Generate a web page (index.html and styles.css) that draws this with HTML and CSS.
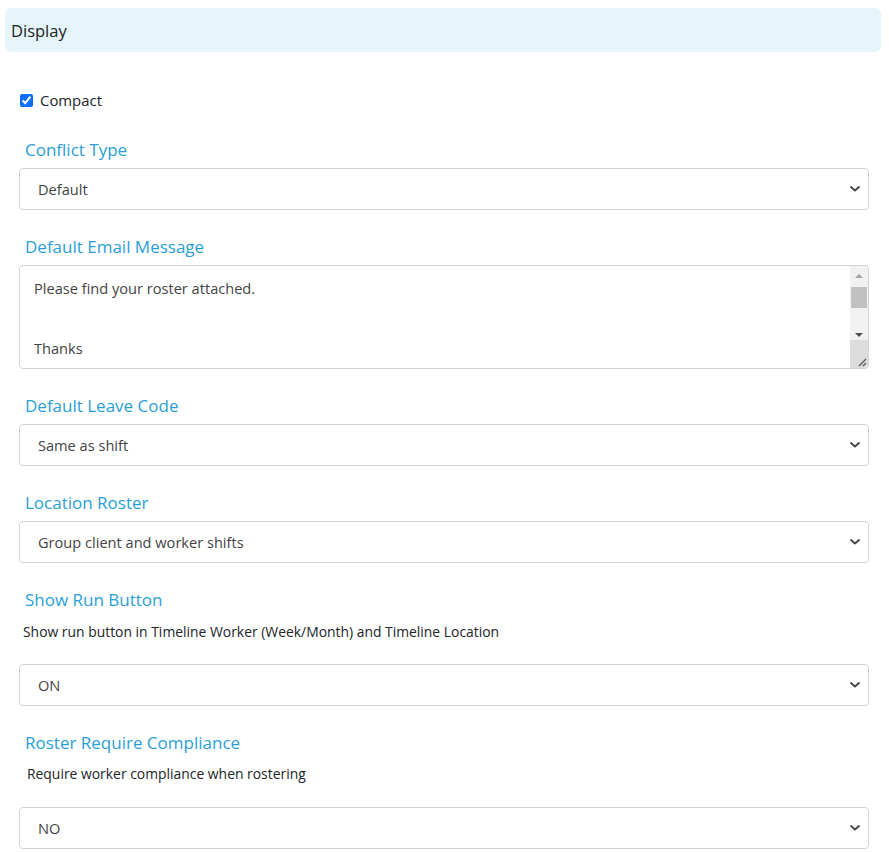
FILE: index.html
```html
<!DOCTYPE html>
<html lang="en">
<head>
    <meta charset="UTF-8">
    <meta name="viewport" content="width=device-width, initial-scale=1.0">
    <title>Display Settings</title>
    <link rel="stylesheet" href="styles.css">
</head>
<body>

    <div class="panel">
        <!-- Header -->
        <div class="panel-header">Display</div>

        <div class="panel-body">
            <label class="check-row">
                <input type="checkbox" checked>
                <span>Compact</span>
            </label>

            <div class="field">
                <h3 class="field-title">Conflict Type</h3>
                <select class="field-select">
                    <option>Default</option>
                </select>
            </div>

            <div class="field">
                <h3 class="field-title">Default Email Message</h3>
                <div class="text-wrap">
                    <textarea class="field-text">Please find your roster attached.


Thanks</textarea>
                    <!-- scrollbar drawn over the box -->
                    <div class="scrollbar">
                        <div class="sb-btn sb-up">
                            <svg width="8" height="4" viewBox="0 0 8 4"><path d="M0 4L4 0L8 4Z" fill="#a3a3a3"/></svg>
                        </div>
                        <div class="sb-thumb"></div>
                        <div class="sb-track"></div>
                        <div class="sb-btn sb-down">
                            <svg width="8" height="4" viewBox="0 0 8 4"><path d="M0 0L4 4L8 0Z" fill="#505050"/></svg>
                        </div>
                        <div class="sb-corner">
                            <svg width="10" height="10" viewBox="0 0 10 10"><path d="M9 2L2 9M9 6L6 9" stroke="#555" stroke-width="1.2"/></svg>
                        </div>
                    </div>
                </div>
            </div>

            <div class="field">
                <h3 class="field-title">Default Leave Code</h3>
                <select class="field-select">
                    <option>Same as shift</option>
                </select>
            </div>

            <div class="field">
                <h3 class="field-title">Location Roster</h3>
                <select class="field-select">
                    <option>Group client and worker shifts</option>
                </select>
            </div>

            <div class="field">
                <h3 class="field-title">Show Run Button</h3>
                <p class="field-help">Show run button in Timeline Worker (Week/Month) and Timeline Location</p>
                <select class="field-select">
                    <option>ON</option>
                </select>
            </div>

            <div class="field">
                <h3 class="field-title">Roster Require Compliance</h3>
                <p class="field-help indent">Require worker compliance when rostering</p>
                <select class="field-select">
                    <option>NO</option>
                </select>
            </div>
        </div>
    </div>

</body>
</html>
```

FILE: styles.css
```css
* {
    margin: 0;
    padding: 0;
    box-sizing: border-box;
}

body {
    font-family: "Open Sans", Arial, sans-serif;
    background-color: #fff;
    color: #212529;
}

.panel {
    width: 889px;
    padding: 8px 8px 0 5px;
}

.panel-header {
    background-color: #e5f5fb;
    border-radius: 6px;
    height: 44px;
    padding: 0 6px;
    font-size: 16.5px;
    line-height: 46px;
    color: #222;
}

.panel-body {
    padding: 0 12px 0 14px;
}

.check-row {
    display: flex;
    align-items: center;
    height: 20px;
    margin-top: 38px;
    margin-left: 1px;
    font-size: 14.9px;
    color: #212529;
}

.check-row input {
    width: 13px;
    height: 13px;
    margin: 0 7px 0 0;
    accent-color: #0d6efd;
}

.field {
    display: flex;
    flex-direction: column;
}

.field-title {
    font-weight: normal;
    font-size: 17px;
    color: #2a9fd6;
    height: 20px;
    line-height: 20px;
    padding-left: 6px;
    margin-top: 27px;
    margin-bottom: 8px;
}

.field:first-of-type .field-title {
    margin-top: 30px;
}

.field-help {
    font-size: 13.9px;
    color: #212529;
    padding-left: 4px;
    margin-top: 4px;
    margin-bottom: 22px;
    line-height: 20px;
}

.field-help.indent {
    padding-left: 8px;
    margin-top: 3px;
    margin-bottom: 23px;
}

.field-select {
    appearance: none;
    -webkit-appearance: none;
    width: 100%;
    height: 42px;
    border: 1px solid #ced4da;
    border-radius: 4px;
    background-color: #fff;
    background-image: url("data:image/svg+xml,%3Csvg xmlns='http://www.w3.org/2000/svg' viewBox='0 0 10 6'%3E%3Cpath d='M1 1l4 3.5L9 1' fill='none' stroke='%23444' stroke-width='1.8' stroke-linecap='round' stroke-linejoin='round'/%3E%3C/svg%3E");
    background-repeat: no-repeat;
    background-position: right 8px center;
    background-size: 10px 6px;
    padding: 0 30px 0 18px;
    font-family: "Open Sans", Arial, sans-serif;
    font-size: 14.6px;
    color: #444;
}

.text-wrap {
    position: relative;
}

.field-text {
    display: block;
    width: 100%;
    height: 104px;
    border: 1px solid #ced4da;
    border-radius: 4px;
    padding: 12px 34px 12px 14px;
    font-family: "Open Sans", Arial, sans-serif;
    font-size: 14.6px;
    line-height: 20px;
    color: #444;
    overflow: hidden;
    resize: none;
}

.scrollbar {
    position: absolute;
    top: 1px;
    right: 1px;
    bottom: 1px;
    width: 18px;
    display: flex;
    flex-direction: column;
    background-color: #f1f1f1;
    border-radius: 0 3px 3px 0;
    overflow: hidden;
}

.sb-btn {
    display: flex;
    justify-content: center;
    align-items: center;
}

.sb-up {
    height: 20px;
}

.sb-thumb {
    height: 21px;
    margin: 1px 1px 0 1px;
    background-color: #c1c1c1;
}

.sb-track {
    flex: 1;
}

.sb-down {
    height: 10px;
}

.sb-corner {
    height: 28px;
    background-color: #dcdcdc;
    display: flex;
    justify-content: flex-end;
    align-items: flex-end;
    padding: 0 1px 1px 0;
}
```
